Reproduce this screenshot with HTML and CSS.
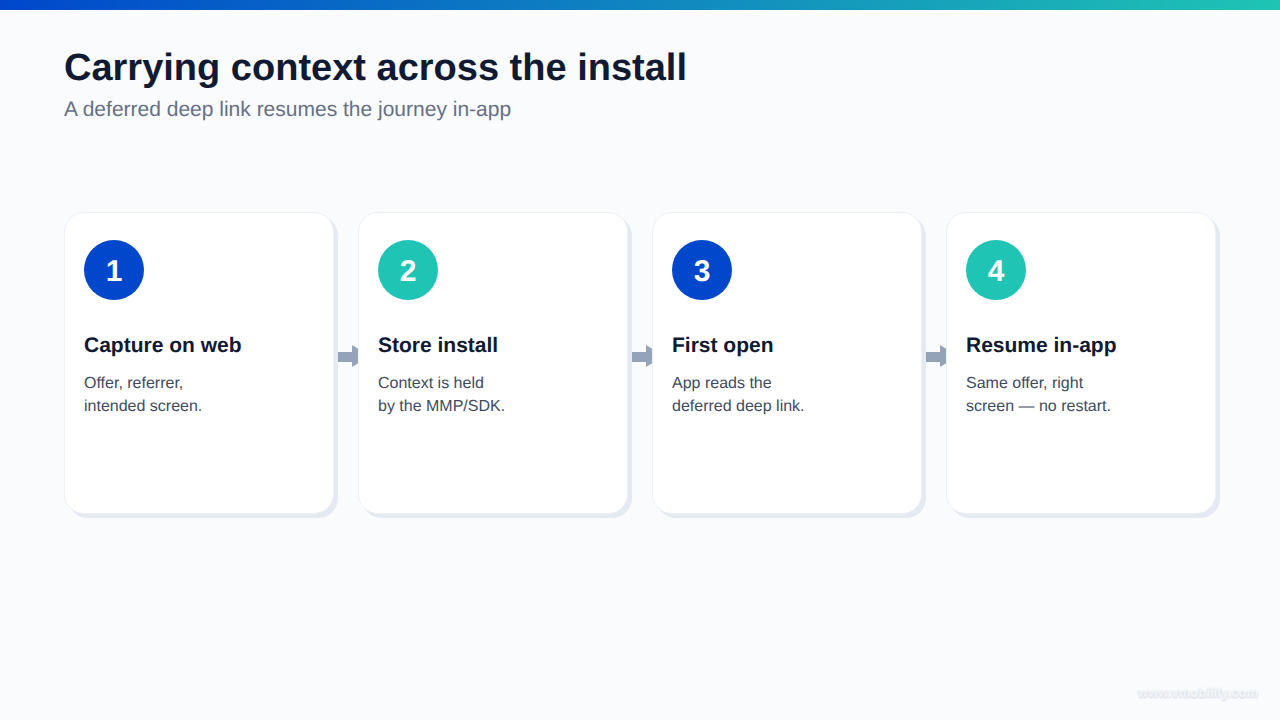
FILE: index.html
```html
<!DOCTYPE html>
<html>
<head>
	<meta charset="UTF-8">
	<title>Carrying context across the install</title>
	<link rel="stylesheet" href="styles.css">
</head>
<body>
	<div class="top-bar"></div>
	<div class="slide">
		<h1>Carrying context across the install</h1>
		<p class="subtitle">A deferred deep link resumes the journey in-app</p>
		<div class="steps">
			<div class="step">
				<div class="card">
					<div class="num blue">1</div>
					<h2>Capture on web</h2>
					<p>Offer, referrer,<br>intended screen.</p>
				</div>
				<div class="arrow"></div>
			</div>
			<div class="step">
				<div class="card">
					<div class="num teal">2</div>
					<h2>Store install</h2>
					<p>Context is held<br>by the MMP/SDK.</p>
				</div>
				<div class="arrow"></div>
			</div>
			<div class="step">
				<div class="card">
					<div class="num blue">3</div>
					<h2>First open</h2>
					<p>App reads the<br>deferred deep link.</p>
				</div>
				<div class="arrow"></div>
			</div>
			<div class="step">
				<div class="card">
					<div class="num teal">4</div>
					<h2>Resume in-app</h2>
					<p>Same offer, right<br>screen — no restart.</p>
				</div>
			</div>
		</div>
	</div>
	<div class="watermark">www.vmobilify.com</div>
</body>
</html>
```

FILE: styles.css
```css
body {
	font-family: "Liberation Sans", Arial, sans-serif;
	text-rendering: geometricPrecision;
	margin: 0;
	width: 1280px;
	height: 720px;
	overflow: hidden;
	background-color: #f9fbfd;
	position: relative;
}

.top-bar {
	height: 10px;
	background: linear-gradient(90deg, #0047cc, #1fc4b4);
}

.slide {
	padding: 35px 64px 0;
}

h1 {
	font-size: 38px;
	line-height: 46px;
	font-weight: 700;
	color: #111a33;
	margin: 0;
}

.subtitle {
	font-size: 21px;
	line-height: 26px;
	color: #667085;
	margin: 6px 0 0;
}

.steps {
	display: flex;
	gap: 24px;
	margin-top: 89px;
}

.step {
	position: relative;
	width: 270px;
}

.card {
	position: relative;
	z-index: 1;
	box-sizing: border-box;
	height: 302px;
	padding: 27px 19px;
	background-color: #fff;
	border: 1px solid #edf0f5;
	border-radius: 20px;
	box-shadow: 4px 4px 0 #e5e9f2;
}

.num {
	width: 60px;
	height: 60px;
	border-radius: 50%;
	color: #fff;
	font-size: 30px;
	font-weight: 700;
	line-height: 64px;
	text-align: center;
}

.blue {
	background-color: #0047cc;
}

.teal {
	background-color: #1fc4b4;
}

h2 {
	font-size: 21px;
	line-height: 26px;
	font-weight: 700;
	color: #111a33;
	margin: 33px 0 0;
}

.card p {
	font-size: 16px;
	line-height: 23px;
	color: #414b5f;
	margin: 13px 0 0;
}

/* sits under the next card, so the tip gets cut off */
.arrow {
	position: absolute;
	left: 273px;
	top: 133px;
	width: 33px;
	height: 22px;
	background-color: #94a3b8;
	clip-path: polygon(0 7px, 15px 7px, 15px 0, 33px 11px, 15px 22px, 15px 17px, 0 17px);
}

.watermark {
	position: absolute;
	right: 22px;
	bottom: 20px;
	font-size: 13px;
	font-weight: 700;
	color: #f4f6f9;
	text-shadow: 0 1px 2px #c5ccd8;
}
```
